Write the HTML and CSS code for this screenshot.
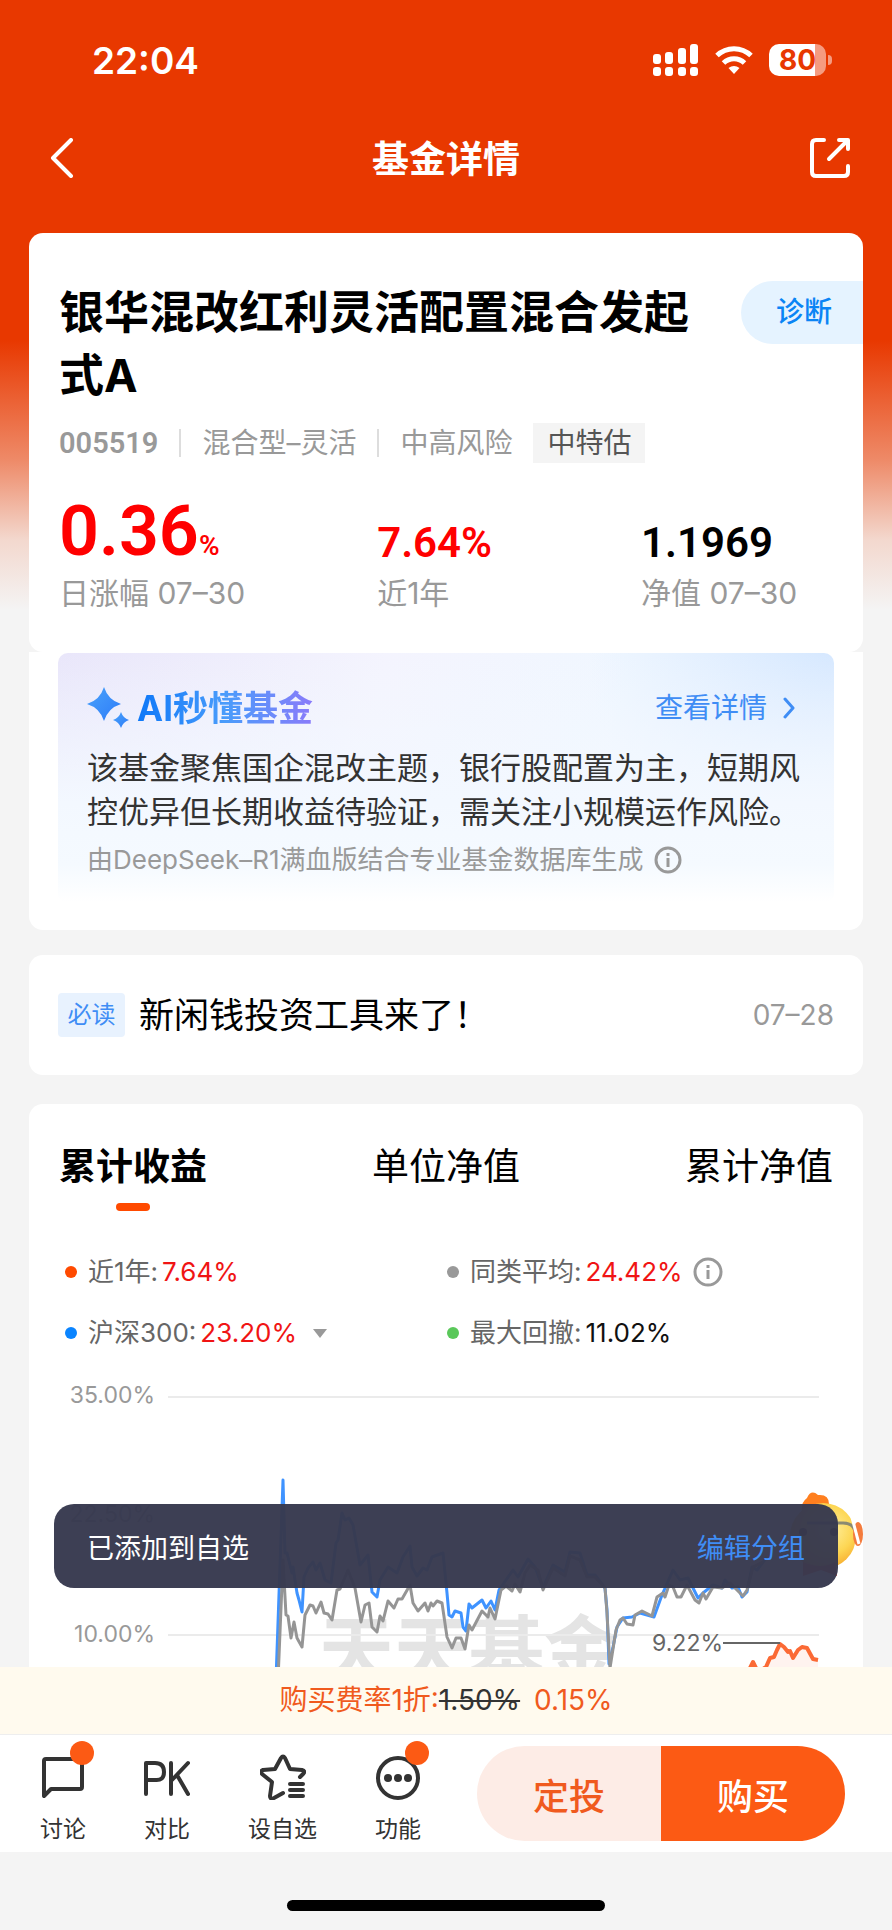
FILE: index.html
```html
<!DOCTYPE html>
<html lang="zh-CN">
<head>
    <meta charset="UTF-8">
    <meta name="viewport" content="width=device-width, initial-scale=1.0">
    <title>基金详情</title>
    <link rel="stylesheet" href="styles.css">
</head>
<body>
    <main class="content">
        <div class="status-bar">
            <span class="time">22:04</span>
            <div class="status-icons">
                <svg width="46" height="32" viewBox="0 0 46 32" fill="#fff">
                    <rect x="0" y="10" width="8" height="10" rx="3"/>
                    <rect x="12" y="8" width="8" height="12" rx="3"/>
                    <rect x="25" y="4" width="8" height="16" rx="3"/>
                    <rect x="37" y="0" width="8" height="20" rx="3"/>
                    <rect x="0" y="23" width="8" height="9" rx="3"/>
                    <rect x="12" y="23" width="8" height="9" rx="3"/>
                    <rect x="25" y="23" width="8" height="9" rx="3"/>
                    <rect x="37" y="23" width="8" height="9" rx="3"/>
                </svg>
                <svg width="38" height="28" viewBox="0 0 38 28" fill="none" stroke="#fff" stroke-width="5">
                    <path d="M2 9.5a24.500 24.500 0 0 1 34 0"/>
                    <path d="M8.500 17a15 15 0 0 1 21 0"/>
                    <path d="M13.500 22q5.500-4 11 0L19 28z" fill="#fff" stroke="none"/>
                </svg>
                <div class="battery"><span>80</span></div>
            </div>
        </div>

        <header class="nav">
            <button type="button" class="icon-btn" aria-label="返回">
                <svg width="24" height="40" viewBox="0 0 24 40" fill="none" stroke="#fff" stroke-width="4" stroke-linecap="round" stroke-linejoin="round"><path d="M21 2L3 20l18 18"/></svg>
            </button>
            <h1>基金详情</h1>
            <button type="button" class="icon-btn" aria-label="分享">
                <svg width="40" height="40" viewBox="0 0 40 40" fill="none" stroke="#fff" stroke-width="4" stroke-linecap="round" stroke-linejoin="round"><path d="M14 2H6q-4 0-4 4v28q0 4 4 4h28q4 0 4-4v-6M29 2h9v9M37 3L19 21"/></svg>
            </button>
        </header>

        <section class="card fund">
            <div class="fund-head">
                <h2>银华混改红利灵活配置混合发起式A</h2>
                <button type="button" class="diagnose">诊断</button>
            </div>
            <div class="meta">
                <span class="code">005519</span>
                <i class="sep"></i>
                <span>混合型–灵活</span>
                <i class="sep"></i>
                <span>中高风险</span>
                <span class="tag">中特估</span>
            </div>
            <div class="stats">
                <div class="stat">
                    <p class="value big up">0.36<small>%</small></p>
                    <p class="label">日涨幅 07–30</p>
                </div>
                <div class="stat">
                    <p class="value up">7.64%</p>
                    <p class="label">近1年</p>
                </div>
                <div class="stat">
                    <p class="value">1.1969</p>
                    <p class="label">净值 07–30</p>
                </div>
            </div>
        </section>

        <section class="card ai-card">
            <div class="ai-box">
                <div class="ai-head">
                    <svg width="42" height="42" viewBox="0 0 42 42">
                        <defs>
                            <linearGradient id="spark" x1="0" y1="0" x2="1" y2="1">
                                <stop offset="0" stop-color="#4aa3fb"/>
                                <stop offset="1" stop-color="#2d7bf8"/>
                            </linearGradient>
                        </defs>
                        <path fill="url(#spark)" d="M17 0Q21 13 34 17Q21 21 17 34Q13 21 0 17Q13 13 17 0z"/>
                        <path fill="url(#spark)" d="M34 25Q36 31 42 33Q36 35 34 41Q32 35 26 33Q32 31 34 25z"/>
                    </svg>
                    <h3>AI秒懂基金</h3>
                    <a href="#" class="more">查看详情
                        <svg width="12" height="22" viewBox="0 0 12 22" fill="none" stroke="#3f8df5" stroke-width="3" stroke-linecap="round" stroke-linejoin="round"><path d="M2 2l8 9-8 9"/></svg>
                    </a>
                </div>
                <p class="ai-text">该基金聚焦国企混改主题，银行股配置为主，短期风控优异但长期收益待验证，需关注小规模运作风险。</p>
                <p class="ai-source">由DeepSeek–R1满血版结合专业基金数据库生成
                    <svg width="28" height="28" viewBox="0 0 28 28" fill="none" stroke="#999" stroke-width="3"><circle cx="14" cy="14" r="12"/><path d="M14 12v9M14 7v3"/></svg>
                </p>
            </div>
        </section>

        <a href="#" class="card notice">
            <span class="must-read">必读</span>
            <span class="notice-title">新闲钱投资工具来了！</span>
            <time>07–28</time>
        </a>

        <section class="card chart-card">
            <div class="tabs">
                <button type="button" class="tab active">累计收益</button>
                <button type="button" class="tab">单位净值</button>
                <button type="button" class="tab">累计净值</button>
            </div>
            <div class="legend">
                <div class="legend-item"><i class="dot orange"></i>近1年:<b class="up">7.64%</b></div>
                <div class="legend-item"><i class="dot gray"></i>同类平均:<b class="up">24.42%</b>
                    <svg width="30" height="30" viewBox="0 0 30 30" fill="none" stroke="#999" stroke-width="3"><circle cx="15" cy="15" r="13"/><path d="M15 13v9M15 8v3"/></svg>
                </div>
                <div class="legend-item"><i class="dot blue"></i>沪深300:<b class="up">23.20%</b><i class="caret"></i></div>
                <div class="legend-item"><i class="dot green"></i>最大回撤:<b>11.02%</b></div>
            </div>
            <svg class="chart" viewBox="0 0 834 300" fill="none">
                <text class="watermark" x="290" y="298">天天基金</text>
                <g stroke="#ebebeb" stroke-width="2">
                    <path d="M139 17h651M139 136h651M139 255h651"/>
                </g>
                <g class="axis" text-anchor="end">
                    <text x="126" y="23">35.00%</text>
                    <text x="126" y="142">22.50%</text>
                    <text x="126" y="262">10.00%</text>
                </g>
                <g stroke-width="3" stroke-linejoin="round">
                    <polyline stroke="#3f93ff" points="247,300 252,157 254,100 256,173 258,173 263,193 264,187 268,213 270,220 273,232 275,197 279,188 284,182 287,190 291,183 296,200 302,203 307,163 309,160 313,133 316,140 320,138 324,145 331,185 339,175 343,212 348,217 351,200 359,187 368,193 374,177 381,166 383,187 388,196 394,188 398,190 403,177 414,173 418,213 420,235 423,237 426,231 432,233 434,247 437,251 440,224 443,228 453,220 457,228 462,221 466,230 470,210 484,190 489,197 499,179 506,187 514,208 524,185 536,192 541,172 551,173 558,195 566,195 576,208 578,230 580,284 584,267 588,247 594,238 603,237 611,233 625,237 633,215 644,190 651,200 659,198 666,212 669,218 674,213 684,205 693,208 696,200 703,208 709,207 713,217 718,212 723,187 728,190 738,177"/>
                    <polyline stroke="#959595" points="249,300 254,180 257,235 259,236 262,258 265,242 268,258 273,267 276,235 281,225 284,226 287,233 292,222 295,233 299,234 303,240 308,210 311,209 319,190 326,208 332,242 336,225 340,223 343,247 348,252 351,236 354,241 359,221 365,228 369,219 373,219 381,205 384,223 389,231 396,223 399,231 402,223 404,226 408,221 413,223 418,257 423,268 427,258 432,258 436,269 440,245 443,250 453,231 459,237 461,228 466,239 472,210 477,206 483,211 486,204 491,212 496,193 501,185 509,190 514,210 524,188 536,196 541,176 551,180 558,197 566,197 576,208 578,233 581,288 587,250 591,240 594,238 598,244 604,245 606,235 613,231 623,236 628,217 634,213 636,217 640,205 644,207 648,217 652,217 658,205 666,220 670,223 674,213 677,219 684,207 693,208 701,203 711,213 714,216 718,210 724,187 734,182"/>
                </g>
                <path fill="#fff3ef" d="M737 290L741 278 751 264 764 278 773 267 789 280V300H737z"/>
                <polyline stroke="#fb6a35" stroke-width="4" stroke-linejoin="round" points="719,292 724,282 729,292 737,287 741,278 745,277 748,270 751,264 755,267 759,272 761,271 764,278 769,270 773,267 778,268 784,279 789,280"/>
                <path stroke="#666" stroke-width="2" d="M694 263h57"/>
                <text class="peak" x="694" y="271" text-anchor="end">9.22%</text>
            </svg>
        </section>

        <svg class="mascot" width="76" height="96" viewBox="0 0 76 96">
            <defs>
                <radialGradient id="chick" cx=".6" cy=".4" r=".6">
                    <stop offset="0" stop-color="#fff0a0"/>
                    <stop offset=".6" stop-color="#fdd653"/>
                    <stop offset="1" stop-color="#f7a92c"/>
                </radialGradient>
            </defs>
            <path fill="#ff7f1f" d="M16 26Q12 14 20 8Q24-1 31 5Q42 4 42 14Q49 18 46 30z"/>
            <circle cx="36" cy="46" r="33" fill="url(#chick)"/>
            <path fill="none" stroke="#8b8a72" stroke-width="3" d="M20 33h36q10 0 12 8"/>
            <ellipse cx="71" cy="44" rx="5" ry="12" fill="#f47b3c"/>
            <path stroke="#fff" stroke-width="3" d="M62 16l10 38"/>
            <circle cx="16" cy="42" r="4" fill="#4a2a12"/>
            <circle cx="47" cy="42" r="4" fill="#4a2a12"/>
            <path fill="#e8442a" d="M16 72q18 8 32 0l2 14-16-6-18 6z"/>
        </svg>

        <div class="toast" role="status">
            <span>已添加到自选</span>
            <a href="#">编辑分组</a>
        </div>
    </main>

    <footer class="bottom">
        <p class="fee">购买费率1折:<del>1.50%</del><span>0.15%</span></p>
        <div class="action-bar">
            <div class="tools">
                <button type="button" class="tool badge">
                    <svg width="46" height="46" viewBox="0 0 46 46" fill="none" stroke="#333" stroke-width="4" stroke-linejoin="round"><path d="M4 42V7q0-2 2-2h34q2 0 2 2v26q0 2-2 2H11z"/></svg>
                    讨论
                </button>
                <button type="button" class="tool">
                    <svg width="46" height="46" viewBox="0 0 46 46" fill="none" stroke="#333" stroke-width="4" stroke-linecap="round" stroke-linejoin="round"><path d="M2 40V9h9q9 0 9 9t-9 8H2M27 9v31M44 9L27 27M33 21l11 19"/></svg>
                    对比
                </button>
                <button type="button" class="tool">
                    <svg width="46" height="46" viewBox="0 0 46 46" fill="none" stroke="#333" stroke-width="4" stroke-linecap="round" stroke-linejoin="round"><path d="M23 39l-9 5q-4 2-4-2l2-14L2 20q-2-3 1-4l12-1 6-11q2-3 4 0l5 11 12 1q4 1 1 4l-3 3M30 30h13M30 36h13M30 42h13"/></svg>
                    设自选
                </button>
                <button type="button" class="tool badge">
                    <svg width="46" height="46" viewBox="0 0 46 46" fill="#333"><circle cx="23" cy="24" r="20" fill="none" stroke="#333" stroke-width="4"/><circle cx="13" cy="24" r="4"/><circle cx="23" cy="24" r="4"/><circle cx="33" cy="24" r="4"/></svg>
                    功能
                </button>
            </div>
            <div class="buy-group">
                <button type="button" class="plan">定投</button>
                <button type="button" class="buy">购买</button>
            </div>
        </div>
        <div class="home-area"><i class="home-indicator"></i></div>
    </footer>
</body>
</html>
```

FILE: styles.css
```css
* {
    box-sizing: border-box;
}

body {
    margin: 0;
    height: 100vh;
    display: flex;
    flex-direction: column;
    font-family: Inter, "Noto Sans CJK SC", sans-serif;
    color: #000;
    background-color: #f4f4f4;
}

h1, h2, h3, p {
    margin: 0;
}

button {
    font: inherit;
    border: none;
    padding: 0;
    background: none;
    color: inherit;
    cursor: pointer;
}

a {
    color: inherit;
    text-decoration: none;
}

svg {
    display: block;
    flex: none;
}

.content {
    position: relative;
    flex: 1;
    min-height: 0;
    overflow: hidden;
    background: linear-gradient(#e83800 0, #e83800 340px, #ee8a68 460px, #f3d8ce 540px, #f4f4f4 610px);
}

/* status bar */
.status-bar {
    display: flex;
    align-items: center;
    justify-content: space-between;
    height: 120px;
    padding: 0 60px 0 92px;
    color: #fff;
}

.time {
    font-size: 37px;
    font-weight: 600;
}

.status-icons {
    display: flex;
    align-items: center;
    gap: 16px;
}

.battery {
    position: relative;
    width: 57px;
    height: 32px;
    margin-right: 6px;
    border-radius: 10px;
    background: linear-gradient(90deg, #fff 80%, #f59b80 80%);
    color: #e83800;
    font-size: 28px;
    font-weight: 700;
    line-height: 32px;
    text-align: center;
}

.battery::after {
    content: "";
    position: absolute;
    right: -6px;
    top: 11px;
    width: 4px;
    height: 10px;
    border-radius: 0 4px 4px 0;
    background-color: #f59b80;
}

/* nav */
.nav {
    display: flex;
    align-items: center;
    justify-content: space-between;
    height: 80px;
    margin-bottom: 33px;
    padding: 0 42px;
    color: #fff;
}

.nav h1 {
    font-size: 37px;
    font-weight: 700;
    line-height: 52px;
}

.icon-btn {
    display: flex;
    justify-content: center;
    width: 40px;
    padding-bottom: 4px;
}

/* cards */
.card {
    margin: 0 29px;
    border-radius: 14px;
    background-color: #fff;
}

.fund {
    padding: 48px 0 39px 30px;
}

.fund-head {
    display: flex;
    align-items: flex-start;
    justify-content: space-between;
}

.fund-head h2 {
    max-width: 640px;
    font-size: 45px;
    font-weight: 700;
    line-height: 63px;
}

.diagnose {
    width: 122px;
    height: 63px;
    padding: 0 0 6px 4px;
    border-radius: 32px 0 0 32px;
    background-color: #e5f3ff;
    color: #0a84f5;
    font-size: 28px;
    font-weight: 500;
}

.meta {
    display: flex;
    align-items: center;
    gap: 21px;
    margin-top: 16px;
    color: #999;
    font-size: 28px;
    line-height: 40px;
}

.code {
    font-family: Roboto, sans-serif;
    font-size: 29px;
    font-weight: 600;
}

.sep {
    width: 2px;
    height: 28px;
    background-color: #ddd;
}

.tag {
    padding: 0 14px;
    background-color: #f4f4f4;
    color: #555;
}

.stats {
    display: grid;
    grid-template-columns: 41% 34% 25%;
    align-items: end;
    margin-top: 26px;
    padding-right: 28px;
}

.value {
    font-family: Roboto, sans-serif;
    font-size: 42px;
    font-weight: 600;
    line-height: 60px;
}

.value.big {
    font-size: 70px;
    line-height: 84px;
}

.value small {
    font-size: 28px;
    line-height: 40px;
}

.up {
    color: #f00;
}

.label {
    color: #999;
    font-size: 30px;
    line-height: 40px;
}

/* ai summary */
.ai-card {
    padding: 1px 29px 28px;
    border-radius: 0 0 14px 14px;
}

.ai-box {
    padding: 33px 29px 24px;
    border-radius: 10px;
    background:
        linear-gradient(rgba(246, 250, 255, 0), #f3f8ff 60%, #f5faff 85%, #fff),
        radial-gradient(circle at 100% 0, #d6e8ff, rgba(214, 232, 255, 0) 30%),
        linear-gradient(100deg, #e9e6fa, #f4f4fe 40%, #f0f7ff 70%);
}

.ai-head {
    display: flex;
    align-items: center;
    line-height: 44px;
}

.ai-head h3 {
    margin-left: 8px;
    font-size: 35px;
    font-weight: 700;
    background: linear-gradient(90deg, #0d78f8, #4a9cfb 50%, #8a7bfa);
    -webkit-background-clip: text;
    background-clip: text;
    color: transparent;
}

.more {
    display: flex;
    align-items: center;
    gap: 16px;
    margin-left: auto;
    margin-right: 10px;
    color: #3f8df5;
    font-size: 28px;
}

.ai-text {
    margin-top: 16px;
    color: #333;
    font-size: 31px;
    line-height: 44px;
}

.ai-source {
    display: flex;
    align-items: center;
    gap: 10px;
    margin-top: 8px;
    color: #999;
    font-size: 26px;
    line-height: 36px;
}

/* notice */
.notice {
    display: flex;
    align-items: center;
    height: 120px;
    margin-top: 25px;
    padding: 0 29px;
}

.must-read {
    width: 67px;
    border-radius: 4px;
    background-color: #e8f2fe;
    color: #3f8df5;
    font-size: 24px;
    line-height: 44px;
    text-align: center;
}

.notice-title {
    margin-left: 14px;
    font-size: 35px;
    line-height: 52px;
}

.notice time {
    margin-left: auto;
    color: #999;
    font-size: 28px;
}

/* chart */
.chart-card {
    margin-top: 29px;
    padding-top: 37px;
}

.tabs {
    display: flex;
    justify-content: space-between;
    padding: 0 30px;
}

.tab {
    font-size: 37px;
    line-height: 52px;
}

.tab::after {
    content: "";
    display: block;
    width: 34px;
    height: 8px;
    margin: 10px auto 0;
    border-radius: 4px;
}

.tab.active {
    font-weight: 700;
}

.tab.active::after {
    background-color: #ff4a00;
}

.legend {
    display: grid;
    grid-template-columns: 1fr 1fr;
    gap: 21px 0;
    margin-top: 41px;
    padding: 0 34px 0 36px;
}

.legend-item {
    display: flex;
    align-items: center;
    color: #666;
    font-size: 26px;
    line-height: 40px;
}

.legend-item b {
    margin-left: 4px;
    color: #111;
    font-weight: 400;
}

.legend-item b.up {
    color: #f01414;
}

.legend-item svg {
    margin-left: 10px;
}

.dot {
    width: 12px;
    height: 12px;
    margin-right: 11px;
    border-radius: 50%;
}

.orange { background-color: #ff4a00; }
.gray { background-color: #999; }
.blue { background-color: #0a84ff; }
.green { background-color: #5ac85a; }

.caret {
    margin-left: 16px;
    border: 7px solid transparent;
    border-top: 9px solid #999;
    border-bottom: 0;
}

.chart {
    width: 100%;
    margin-top: 27px;
}

.chart text {
    font-size: 23px;
}

.axis {
    fill: #999;
}

.chart .peak {
    fill: #666;
}

.chart .watermark {
    fill: #e4e4e4;
    font-size: 75px;
    font-weight: 700;
}

.mascot {
    position: absolute;
    right: 29px;
    bottom: 81px;
}

.toast {
    position: absolute;
    left: 54px;
    right: 54px;
    bottom: 79px;
    display: flex;
    align-items: center;
    justify-content: space-between;
    height: 84px;
    padding: 0 33px;
    border-radius: 20px;
    background-color: rgba(55, 57, 78, 0.97);
    color: #fff;
    font-size: 27px;
}

.toast a {
    color: #3f8df5;
}

/* bottom bar */
.bottom {
    flex: none;
}

.fee {
    background-color: #fffaee;
    border-bottom: 1px solid #eee;
    color: #f05a1e;
    font-size: 28px;
    line-height: 67px;
    text-align: center;
}

.fee del {
    color: #333;
}

.fee span {
    margin-left: 14px;
}

.action-bar {
    display: flex;
    align-items: center;
    justify-content: space-between;
    height: 117px;
    padding: 0 47px 0 40px;
    background-color: #fff;
}

.tools {
    display: flex;
    gap: 58px;
    padding-top: 12px;
}

.tool {
    position: relative;
    display: flex;
    flex-direction: column;
    align-items: center;
    gap: 13px;
    color: #333;
    font-size: 23px;
    line-height: 32px;
}

.badge::after {
    content: "";
    position: absolute;
    top: -13px;
    right: -8px;
    width: 24px;
    height: 24px;
    border-radius: 50%;
    background-color: #fc5a14;
}

.buy-group {
    display: flex;
    width: 368px;
    height: 95px;
    border-radius: 48px;
    overflow: hidden;
    font-size: 36px;
    font-weight: 500;
}

.buy-group button {
    flex: 1;
}

.plan {
    background-color: #fdece6;
    color: #f05a1e;
}

.buy-group .buy {
    background-color: #fc5a14;
    color: #fff;
}

.home-area {
    display: flex;
    justify-content: center;
    height: 78px;
    padding-top: 48px;
}

.home-indicator {
    width: 318px;
    height: 11px;
    border-radius: 6px;
    background-color: #000;
}
```
